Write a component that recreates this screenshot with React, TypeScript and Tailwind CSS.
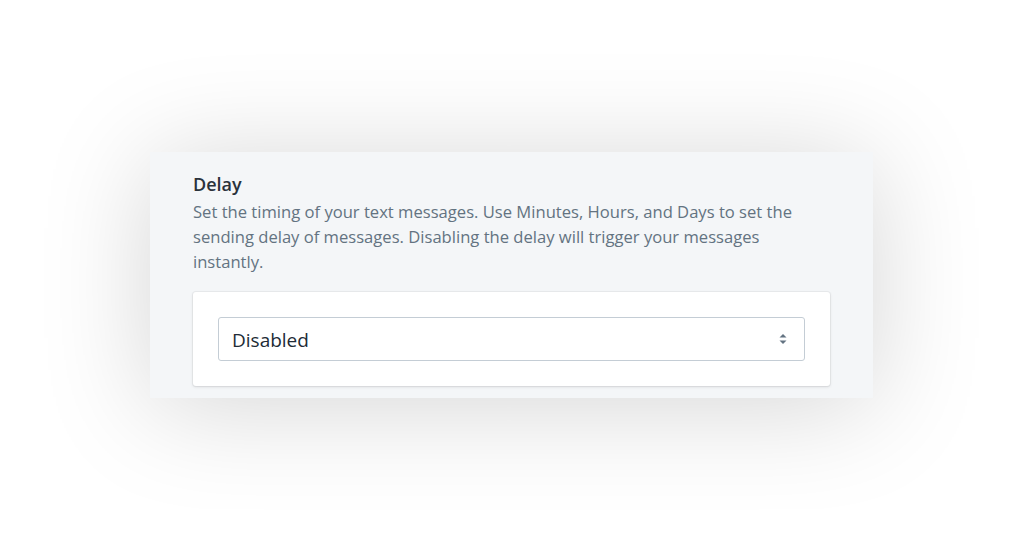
import React from "react";

export default function App() {
  return (
    <div
      className="w-full h-[558px] bg-white flex justify-center items-start pt-[152px]"
      style={{ fontFamily: '"Open Sans", "Noto Sans", sans-serif' }}
    >
      <div className="w-[723px] bg-[#f4f6f8] shadow-[0_8px_110px_rgba(0,0,0,0.17)] px-[43px] pt-[20px] pb-[12px] flex flex-col">
        <div className="text-[18px] leading-[24px] font-semibold text-[#2a323b]">Delay</div>
        <p className="text-[16.6px] leading-[25px] text-[#637381] mt-[3px]">
          Set the timing of your text messages. Use Minutes, Hours, and Days to set the sending delay of messages. Disabling the delay will trigger your messages instantly.
        </p>
        <div className="mt-[18px] bg-white rounded-[3px] shadow-[0_0_0_1px_rgba(63,63,68,0.05),0_1px_3px_0_rgba(63,63,68,0.15)] p-[25px]">
          <div className="h-[44px] border border-[#c4cdd5] rounded-[3px] flex items-center justify-between pl-[13px] pr-[17px] bg-white">
            <span className="text-[19px] leading-[26px] pt-[1px] text-[#212b36]">Disabled</span>
            <svg width="8" height="12" viewBox="0 0 8 12">
              <path d="M4 1 L7.5 4.5 H0.5 Z" fill="#637381" />
              <path d="M4 11 L7.5 7.5 H0.5 Z" fill="#637381" />
            </svg>
          </div>
        </div>
      </div>
    </div>
  );
}
